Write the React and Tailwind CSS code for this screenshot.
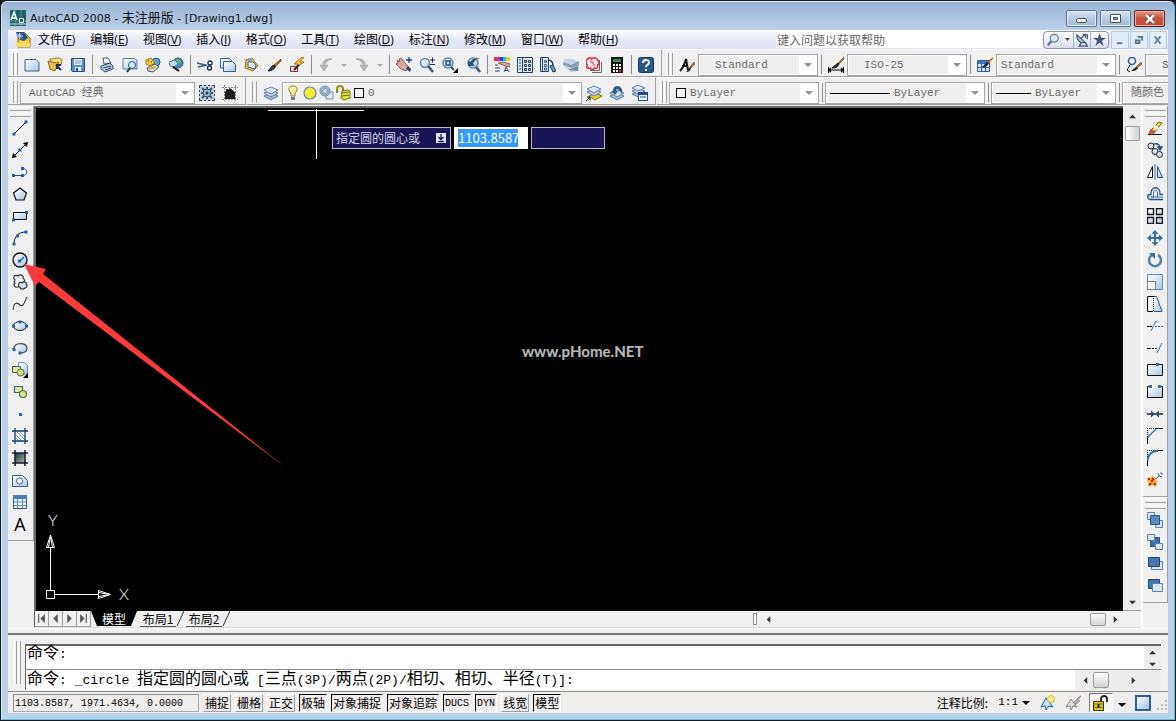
import React, { useState } from "react";

const ICONS = {
  // standard toolbar
  new: <path d="M1 2.500h11l3 3V14H1z" fill="url(#pale)" stroke="#33608f" />,
  open: (
    <>
      <path d="M3 2l9-1 3 2-1 5-9 1z" fill="#f5dc84" stroke="#a87f1c" />
      <path d="M1 4l3 1 6 1 2-1-4 9-5-2z" fill="#e9bd4d" stroke="#8d6a18" />
      <path d="M9 8l5 5M10 12V8h4" fill="none" stroke="#17315c" strokeWidth="2" />
    </>
  ),
  save: (
    <>
      <path d="M1.500 1.500h13v13h-12l-1-1z" fill="#5b8fc4" stroke="#214a7d" />
      <path d="M4 2h8v6H4zM5 10h6v4H5z" fill="#e6eef7" />
      <path d="M5 4h6M5 6h6" stroke="#7c9cc0" />
      <path d="M6 11h2v3H6z" fill="#214a7d" />
    </>
  ),
  print: (
    <>
      <path d="M4 1h5l3 5-7 1z" fill="#fff" stroke="#43597c" />
      <path d="M2 9l9-3 3 3v3l-8 3-4-3z" fill="#b9c8dd" stroke="#33496e" />
      <path d="M4 11l8-2M6 13l6-2" stroke="#33496e" />
    </>
  ),
  preview: (
    <>
      <path d="M1 1.500h12l2 2V12H1z" fill="url(#pale)" stroke="#5c7fa8" />
      <circle cx="10" cy="8" r="3.500" fill="#d4ecf5" stroke="#2c5687" />
      <path d="M8 11l-3 4" stroke="#17315c" strokeWidth="2" />
    </>
  ),
  publish: (
    <>
      <circle cx="11" cy="5" r="4" fill="#5ea1d0" stroke="#2a5a88" />
      <path d="M1 3l5-2 4 5-5 3-4-2z" fill="#f5cb3c" stroke="#9d7b12" />
      <path d="M3 4h1M6 5h1" stroke="#5c4607" strokeWidth="1.500" />
      <path d="M2 11l8-4 4 3-6 5-5-1z" fill="#dde5ee" stroke="#40587c" />
      <path d="M4 12l7-2" stroke="#dda821" strokeWidth="2" />
    </>
  ),
  dwf: (
    <>
      <circle cx="10" cy="6" r="5" fill="#3e8fb8" stroke="#355a7d" />
      <path d="M8 2c3 0 4 1 5 3l-3 3-3-2z" fill="#56b872" />
      <path d="M1 5l6-2 3 4-4 3-4-1z" fill="#c9dbea" stroke="#57789c" />
      <path d="M5 10l6 4" stroke="#111" strokeWidth="2" />
    </>
  ),
  cut: (
    <>
      <path d="M0 6l10 2.500M1 10l9-2" stroke="#3b5c86" strokeWidth="1.300" />
      <circle cx="13" cy="6" r="2" fill="none" stroke="#1b2b4b" strokeWidth="1.300" />
      <circle cx="12.500" cy="11" r="2" fill="none" stroke="#1b2b4b" strokeWidth="1.300" />
    </>
  ),
  copy: (
    <>
      <path d="M.5 1.500h9l2 2V11H.5z" fill="url(#pale)" stroke="#33608f" />
      <path d="M3.500 4.500h9l3 3v7h-12z" fill="url(#pale)" stroke="#33608f" />
    </>
  ),
  paste: (
    <>
      <path d="M3 3l6-2 6 8-5 5-8-3z" fill="#e8c462" stroke="#8f6e20" />
      <path d="M5 1h4v3H5z" fill="#8fa0b8" />
      <path d="M5 5h5l3 3-1 4-7-2z" fill="#eaf2fa" stroke="#33608f" />
    </>
  ),
  match: (
    <>
      <path d="M15 2L8 8l1 2 6-6z" fill="#b5701d" stroke="#5a3a12" strokeWidth=".7" />
      <path d="M8 8l1.500 2C7 13 5 14 2 14c2-2 3-5 6-6z" fill="#33415b" stroke="#111827" />
    </>
  ),
  block: (
    <>
      <path d="M1.500 9.500h7v5h-7z" fill="#dce9f7" stroke="#a3231c" />
      <path d="M13 0L5 7h4l-3 4 9-6h-4l4-5z" fill="#fac832" stroke="#a86a0c" />
      <path d="M5 13l5-5" stroke="#222b3f" strokeWidth="2" />
    </>
  ),
  undo: <path d="M14 2C8 1 4 4 5 9l-3-1 4 6 4-6-3 1c0-4 3-6 7-7z" fill="#b9b9b9" stroke="#adadad" />,
  redo: <path d="M2 2c6-1 10 2 9 7l3-1-4 6-4-6 3 1c0-4-3-6-7-7z" fill="#b9b9b9" stroke="#adadad" />,
  pan: (
    <>
      <path d="M1 3l3 2-1-3 2-1 4 5 1 1 3 4-3 3-5-2-5-5 2-1z" fill="#e0a39b" stroke="#8a5a58" />
      <path d="M10 12l4 3 1-3-3-3z" fill="#1f3f77" />
      <path d="M13 0v6M10 3h6" stroke="#1f3f77" strokeWidth="1.300" />
    </>
  ),
  zoom: (
    <>
      <circle cx="6" cy="6" r="4.500" fill="url(#pale)" stroke="#6683a5" strokeWidth="1.500" />
      <path d="M9 9l5 6" stroke="#39537b" strokeWidth="2.500" />
      <path d="M11 3h5M13.500.5v5M11 7.500h5" stroke="#1d3155" />
    </>
  ),
  zoomWindow: (
    <>
      <circle cx="6" cy="6" r="5" fill="url(#pale)" stroke="#6683a5" strokeWidth="1.500" />
      <path d="M4 4h4v4H4z" fill="none" stroke="#1f4d88" strokeWidth="1.500" />
      <path d="M9 10l3 3" stroke="#39537b" strokeWidth="2" />
      <path d="M16 11v5h-5z" fill="#000" />
    </>
  ),
  zoomPrev: (
    <>
      <circle cx="8" cy="6" r="5" fill="url(#pale)" stroke="#6683a5" strokeWidth="1.500" />
      <path d="M11 10l4 5" stroke="#39537b" strokeWidth="2.500" />
      <path d="M3 9V3l2 2c2-3 5-4 10-4-4 1-6 3-7 6l2 2z" fill="#27517f" />
    </>
  ),
  props: (
    <>
      <path d="M0 0h3v4H0z" fill="#d33" />
      <path d="M3 0h3v4H3z" fill="#c2c" />
      <path d="M6 0h3v4H6z" fill="#24d" />
      <path d="M9 0h3v4H9z" fill="#1cc" />
      <path d="M12 0h4v4h-4z" fill="#ec2" />
      <path d="M4 6l6-1 6 2v3l-5-1z" fill="#e0a39b" stroke="#8a5a58" />
      <path d="M1 8h3M1 11h5M1 14h5M10 15l2-5 3 5M11 13.500h3" fill="none" stroke="#31496f" />
    </>
  ),
  designCenter: (
    <>
      <path d="M.5.5h15v15H.5z" fill="#e7eef7" stroke="#193d70" />
      <path d="M5.500 1v14" stroke="#193d70" />
      <path d="M2 3h2M2 6h2M2 9h2M2 12h2" stroke="#193d70" />
      <path d="M7.500 3.500h2v2h-2zM11.500 3.500h2v2h-2zM7.500 7.500h2v2h-2zM11.500 7.500h2v2h-2zM7.500 11.500h2v2h-2zM11.500 11.500h2v2h-2z" fill="#d7c98c" stroke="#193d70" />
    </>
  ),
  palettes: (
    <>
      <path d="M.5.5h8v14h-8z" fill="#e7eef7" stroke="#193d70" />
      <path d="M2.500 1v13" stroke="#193d70" />
      <path d="M4.500 3.500h2v2h-2zM4.500 7.500h2v2h-2zM4.500 11h2v2h-2z" fill="#fff" stroke="#2c5a93" />
      <path d="M8 3c3 0 5 1 5 6" fill="none" stroke="#193d70" strokeWidth="1.500" />
      <path d="M10 9l3-1 3 6-3 1z" fill="#6b8fb9" stroke="#193d70" />
    </>
  ),
  sheetSet: (
    <>
      <path d="M1 2h9l6 3v9l-8 1-7-5z" fill="#c5d3de" />
      <path d="M0 5l8 3 8-4v4l-7 3-9-3z" fill="#86a2b6" />
      <path d="M5 13l10-4v5z" fill="#6d8ba1" />
    </>
  ),
  markup: (
    <>
      <path d="M4 13.500h9.500V3M6 15.500h9.500V5" fill="none" stroke="#6a6a6a" />
      <path d="M1.500 2c2-2 4-1 4 0 2-2 6-1 6 1 2 1 2 4 0 5 1 3-1 4-3 3-1 2-4 2-4 0-3 1-5-1-3-3-2-2-2-4 0-6z" fill="#fbeaec" stroke="#d9294a" strokeWidth="1.500" />
      <path d="M4 5h3v2M7 8h2" fill="none" stroke="#d9294a" />
    </>
  ),
  calc: (
    <>
      <path d="M2 0h12v16H2z" fill="#151515" />
      <path d="M4 2h8v3H4z" fill="#3f8a4c" />
      <path d="M4 7h2v2H4zM7 7h2v2H7zM10 7h2v2h-2zM4 10h2v2H4zM7 10h2v2H7zM10 10h2v2h-2zM4 13h2v2H4zM7 13h2v2H7z" fill="#f4f4f4" />
      <path d="M10 13h2v2h-2z" fill="#e22" />
    </>
  ),
  help: (
    <>
      <rect x=".5" y=".5" width="15" height="15" rx="2" fill="#27588f" stroke="#183a66" />
      <path d="M5 6c0-4 6-4 6-.5C11 8 8 7.500 8 10M8 12v2" fill="none" stroke="#fff" strokeWidth="2" />
    </>
  ),
  // styles
  textStyle: (
    <>
      <path d="M1 14C4 11 6 6 7 2l2 11M3 9h6" fill="none" stroke="#111" strokeWidth="2" />
      <path d="M15 5l-4 5 1 1 4-4z" fill="#b57d3d" stroke="#5a3a12" strokeWidth=".6" />
      <path d="M11 10l-4 5c3 0 4-1 5-4z" fill="#222" />
    </>
  ),
  dimStyle: (
    <>
      <path d="M.5 10v6M15.500 10v6M1 13h14M3 11l-2 2 2 2M13 11l2 2-2 2" fill="none" stroke="#000" strokeWidth="1.200" />
      <path d="M16 0l-6 6 1 1 5-5z" fill="#b5701d" stroke="#5a3a12" strokeWidth=".6" />
      <path d="M10 6l-6 5c3 0 5 0 7-4z" fill="#222" stroke="#222" />
    </>
  ),
  tableStyle: (
    <>
      <path d="M.5 3.500h12v11H.5z" fill="#cfe0f2" stroke="#2d5e9c" />
      <path d="M1 4h11v3H1z" fill="#3b75b8" />
      <path d="M1 10.500h11M4.500 7v7M8.500 7v7" stroke="#2d5e9c" />
      <path d="M16 0l-6 5 1 2 5-5z" fill="#b5701d" />
      <path d="M10 5l-5 5c3 0 5 0 7-4z" fill="#222" />
    </>
  ),
  leaderStyle: (
    <>
      <circle cx="6" cy="4" r="3.500" fill="#e8f2fb" stroke="#2d5e9c" strokeWidth="1.500" />
      <path d="M4 8l-3 5 3 2" fill="none" stroke="#000" />
      <path d="M15 5l-5 5 1 1 5-4z" fill="#b57d3d" stroke="#5a3a12" strokeWidth=".6" />
      <path d="M10 10l-5 4c3 0 5 0 7-3z" fill="#222" />
    </>
  ),
  // workspaces and layers
  gearBox: (
    <>
      <path d="M0 0h16v16H0z" fill="#c5d0da" />
      <path d="M.5 3V.5H3M13 .5h2.500V3M15.500 13v2.500H13M3 15.500H.5V13M5 .5h2M9 .5h2M5 15.500h2M9 15.500h2M.5 5v2M.5 9v2M15.500 5v2M15.500 9v2" fill="none" stroke="#23405f" />
      <path d="M3 3l10 10M13 3L3 13M8 2v12M2 8h12" stroke="#35546f" strokeWidth="2" />
      <circle cx="8" cy="8" r="4" fill="#9fb8cf" stroke="#2c4a68" />
      <circle cx="8" cy="8" r="1.500" fill="#23405f" />
    </>
  ),
  home: (
    <>
      <path d="M0 2.500h16M0 14.500h16M2.500 0v16M13.500 0v16" stroke="#888" strokeDasharray="2 1" />
      <path d="M8 3l6 5h-1v6H3V8H2l2-2V4h2v1z" fill="#1d1d1d" />
    </>
  ),
  layers: (
    <>
      <path d="M1 11l7-3 7 3-7 4z" fill="#a5bdd6" stroke="#5f7fa3" />
      <path d="M1 8l7-3 7 3-7 4z" fill="#c1d3e5" stroke="#5f7fa3" />
      <path d="M1 5l7-3 7 3-7 4z" fill="#dbe7f2" stroke="#5f7fa3" />
    </>
  ),
  bulb: (
    <>
      <path d="M8 1c-5 0-5 5-2 7v3h4V8c3-2 3-7-2-7z" fill="#fbf6a0" stroke="#8b7d2a" />
      <path d="M6 12h4v3H6z" fill="#6b7f95" />
    </>
  ),
  sun: <circle cx="8" cy="8" r="6" fill="#f4ea3a" stroke="#6d86a0" strokeWidth="1.200" />,
  viewport: (
    <>
      <path d="M7 7h7v7H7z" fill="#dfe6ee" stroke="#7d92a8" />
      <circle cx="6" cy="6" r="5" fill="#9db8ca" stroke="#6f8ea8" />
      <path d="M2 6h8M6 2v8M3.500 3.500l5 5M8.500 3.500l-5 5" stroke="#6f8ea8" />
      <circle cx="6" cy="6" r="2" fill="#c9d9e4" />
    </>
  ),
  unlock: (
    <>
      <path d="M1 8V4c0-4 6-4 6 0v2" fill="none" stroke="#8b8f1d" strokeWidth="2" />
      <path d="M6 6l6-1 2 1v7l-6 2-3-2z" fill="#dfe23e" stroke="#73761a" />
      <path d="M6 8l7-1M6 11l7-1" stroke="#73761a" />
    </>
  ),
  layerCurrent: (
    <>
      <path d="M3 11l6-3 7 3-7 4z" fill="#e4d22a" stroke="#7f7416" />
      <path d="M1 7l7-3 7 3-7 4z" fill="#c1d3e5" stroke="#5f7fa3" />
      <path d="M1 4l7-3 7 3-7 4z" fill="#dbe7f2" stroke="#5f7fa3" />
      <path d="M0 16l4-4M1 12h3v3" fill="none" stroke="#000" />
    </>
  ),
  layerPrev: (
    <>
      <path d="M1 11l7-3 7 3-7 4z" fill="#a5bdd6" stroke="#5f7fa3" />
      <path d="M1 8l7-3 7 3-7 4z" fill="#dbe7f2" stroke="#5f7fa3" />
      <path d="M13 9c1-5-1-8-5-8-3 0-4 3-4 5H2l4 4 3-4H7c0-3 2-3 6 3z" fill="#2f5c8d" />
    </>
  ),
  layerState: (
    <>
      <path d="M0 9l6-3 7 3-7 3z" fill="#a5bdd6" stroke="#5f7fa3" />
      <path d="M0 6l6-3 7 3-7 3z" fill="#c1d3e5" stroke="#5f7fa3" />
      <path d="M0 3l6-3 7 3-7 3z" fill="#dbe7f2" stroke="#5f7fa3" />
      <path d="M6.500 7.500h9v8h-9z" fill="#f2f7fc" stroke="#1c4f8c" />
      <path d="M6 7h10v3H6z" fill="#1c4f8c" />
      <path d="M8 12h6" stroke="#1c4f8c" />
    </>
  ),
  // draw
  line: (
    <>
      <path d="M2 14L14 2" stroke="#000" />
      <path d="M.5 12.500h3v3h-3zM12.500.5h3v3h-3z" fill="#1e63a8" />
    </>
  ),
  xline: (
    <>
      <path d="M1 15L15 1" stroke="#000" />
      <path d="M0 16l1-5 4 4zM16 0l-1 5-4-4z" fill="#000" />
      <path d="M6.500 6.500h3v3h-3z" fill="#1e63a8" />
    </>
  ),
  pline: (
    <>
      <path d="M2 11.500h9c5 0 5-7 0-7" fill="none" stroke="#334a66" />
      <path d="M0 10h3v3H0zM9 10h3v3H9zM9 3h3v3H9z" fill="#1e63a8" />
    </>
  ),
  polygon: <path d="M8 2l6.500 5-2.500 7H4L1.500 7z" fill="url(#pale)" stroke="#111" strokeWidth="1.200" />,
  rect: (
    <>
      <path d="M1.500 4.500h13v7h-13z" fill="url(#pale)" stroke="#111" />
      <path d="M0 10.500h3v3H0zM13 3h3v3h-3z" fill="#1e63a8" />
    </>
  ),
  arc: (
    <>
      <path d="M2 14C2 7 6 2 14 2" fill="none" stroke="#111" />
      <path d="M.5 12.500h3v3h-3zM4 4.500h3v3H4zM12.500.5h3v3h-3z" fill="#1e63a8" />
    </>
  ),
  circle: (
    <>
      <circle cx="8" cy="8" r="7" fill="url(#pale)" stroke="#111" strokeWidth="1.300" />
      <path d="M8 9l4-4" stroke="#1e63a8" strokeWidth="1.500" />
      <path d="M6 7.500h3v3H6z" fill="#1e63a8" />
    </>
  ),
  cloud: (
    <>
      <path d="M3 6C0 3 3 0 6 2c2-2 6-1 5 2 2 1 2 4 0 5l-5 4c-3 1-5-2-3-4 -1-1-1-2 0-3z" fill="#f4f8fc" stroke="#333" strokeWidth="1.200" />
      <path d="M7 10c0-2 2-2 3-1 1-2 5-1 4 1 2 1 1 4-1 4-2 2-5 1-5-1-2 0-2-2-1-3z" fill="url(#pale)" stroke="#333" strokeWidth="1.200" />
    </>
  ),
  spline: <path d="M1 14c1-8 4-8 7-5s5-4 7-8" fill="none" stroke="#333" strokeWidth="1.100" />,
  ellipse: (
    <>
      <ellipse cx="8" cy="8" rx="6.500" ry="4.500" fill="url(#pale)" stroke="#111" />
      <path d="M0 6.500h3v3H0zM13 6.500h3v3h-3zM6.500 2.500h3v3h-3z" fill="#1e63a8" />
    </>
  ),
  ellipseArc: (
    <>
      <path d="M2 9c-1-7 13-7 13-1 0 4-4 5-6 5" fill="url(#pale)" stroke="#444" strokeWidth="1.200" />
      <path d="M.5 8h3v3h-3zM6.500 11.500h3v3h-3z" fill="#1e63a8" />
    </>
  ),
  insertBlock: (
    <>
      <path d="M6.500.5h6l3 3V12h-9z" fill="url(#pale)" stroke="#6e8fb4" />
      <path d="M.5 4.500h8v6h-8z" fill="#e9eb8a" stroke="#33608f" />
      <circle cx="8.500" cy="10.500" r="3.500" fill="#dfe57a" stroke="#446b4a" />
      <path d="M16 11v5h-5z" fill="#000" />
    </>
  ),
  makeBlock: (
    <>
      <path d="M2.500 2.500h8v6h-8z" fill="#e9eb8a" stroke="#33608f" strokeWidth="1.200" />
      <circle cx="11" cy="10" r="3.500" fill="#dfe57a" stroke="#446b4a" strokeWidth="1.200" />
    </>
  ),
  point: <path d="M7 7h3v3H7z" fill="#1e63a8" />,
  hatch: (
    <>
      <path d="M4 4h9v9H4z" fill="#fff" />
      <path d="M4 7l6 6M4 10l3 3M5 4l8 8M8 4l5 5" stroke="#5a9ad0" />
      <path d="M3 0v16M13 0v16M0 3h16M0 13h16" stroke="#173a66" strokeWidth="1.300" />
    </>
  ),
  gradient: (
    <>
      <path d="M3 3h10v10H3z" fill="url(#dusk)" />
      <path d="M3 0v16M13 0v16M0 3h16M0 13h16" stroke="#111c30" strokeWidth="1.500" />
    </>
  ),
  region: (
    <>
      <path d="M.5 3.500h10l5 5v6H.5z" fill="url(#pale)" stroke="#33608f" />
      <circle cx="7.500" cy="9" r="3" fill="#fff" stroke="#33608f" />
    </>
  ),
  table: (
    <>
      <path d="M1.500 1.500h13v13h-13z" fill="#eef4fb" stroke="#33608f" />
      <path d="M1 1h14v4H1z" fill="#4b7fbd" />
      <path d="M2 8h12M2 11.500h12M5.500 5v9M10.500 5v9" stroke="#5f8bc0" />
    </>
  ),
  // modify
  erase: (
    <>
      <path d="M1 14.500h14" stroke="#000" />
      <path d="M4 10l8-8 3 1-7 9H5z" fill="#f2d33b" stroke="#7a6413" />
      <path d="M4 9l4 3-3 3-3-2z" fill="#d8594a" stroke="#8d3a30" strokeWidth=".6" />
      <path d="M6 7l4 3 2-2-4-3z" fill="#f7f7f7" />
    </>
  ),
  copyObj: (
    <>
      <circle cx="4" cy="4" r="3" fill="url(#pale)" stroke="#222" />
      <circle cx="8" cy="9.500" r="3" fill="url(#pale)" stroke="#222" />
      <circle cx="12.500" cy="12.500" r="3" fill="url(#pale)" stroke="#222" />
      <path d="M7 2c4-1 6 1 6 4M11 5l2 3 2-3z" fill="none" stroke="#1e4f88" strokeWidth="1.500" />
    </>
  ),
  mirror: (
    <>
      <path d="M5.500 2.500v11h-5z" fill="#fff" stroke="#111" />
      <path d="M8 0v16" stroke="#2d6fb4" />
      <path d="M10.500 2.500v11h5z" fill="url(#pale)" stroke="#24527f" />
    </>
  ),
  offset: (
    <>
      <path d="M16 13.500H3c-3 0-3-5 0-5h1c-1-9 10-9 9 0h3" fill="none" stroke="#24527f" strokeWidth="1.300" />
      <path d="M16 11H4.500c-1 0-1 0 0 0H6.500V7c0-4 4-4 4 0v4" fill="none" stroke="#2d6fb4" />
    </>
  ),
  array: <path d="M.5.5h6v6h-6zM9.500.5h6v6h-6zM.5 9.500h6v6h-6zM9.500 9.500h6v6h-6z" fill="url(#pale)" stroke="#111" strokeWidth="1.300" />,
  move: (
    <>
      <path d="M8 2v12M2 8h12" stroke="#3c6da3" strokeWidth="2" />
      <path d="M8 0l3.500 4h-7zM8 16l3.500-4h-7zM0 8l4-3.500v7zM16 8l-4-3.500v7z" fill="#3c6da3" />
    </>
  ),
  rotate: (
    <>
      <path d="M5 3a6 6 0 1 0 6 0" fill="none" stroke="#557fad" strokeWidth="2.500" />
      <path d="M2 1h6v6z" fill="#3c6da3" />
    </>
  ),
  scale: (
    <>
      <path d="M.5.5h15v15H.5z" fill="url(#pale)" stroke="#5b8bbd" />
      <path d="M.5 7.500h8v8h-8z" fill="#fff" stroke="#fff" />
      <path d="M.5 7.500h8v8h-8z" fill="none" stroke="#000" strokeDasharray="1 1" />
    </>
  ),
  stretch: (
    <>
      <path d="M6.500.5h3l5.500 15H6.500z" fill="url(#pale)" stroke="#2a5d92" />
      <path d="M6 .5H.5v15H6" fill="none" stroke="#000" />
      <path d="M6.500 0v16" stroke="#fff" />
      <path d="M6.500 0v16" stroke="#000" strokeDasharray="1 1" />
    </>
  ),
  trim: (
    <>
      <path d="M0 8.500h5" stroke="#000" />
      <path d="M4 13L9 3" stroke="#2d6fb4" />
      <path d="M8 8.500h8" stroke="#2d6fb4" strokeDasharray="2 1" />
    </>
  ),
  extend: (
    <>
      <path d="M0 8.500h4" stroke="#000" />
      <path d="M5 8.500h6" stroke="#000" strokeDasharray="2 1" />
      <path d="M10 13l5-10" stroke="#2d6fb4" />
    </>
  ),
  breakPt: (
    <>
      <path d="M.5 2.500h15v11H.5z" fill="url(#pale)" stroke="#111" />
      <path d="M9 1h3v3H9z" fill="#3c6da3" />
    </>
  ),
  breakObj: (
    <>
      <path d="M3 2.500H.5v11h15v-11H13" fill="url(#pale)" stroke="#111" />
      <path d="M2 1h3v3H2zM11 1h3v3h-3z" fill="#3c6da3" />
    </>
  ),
  join: (
    <>
      <path d="M0 8h16" stroke="#000" strokeWidth="1.300" />
      <path d="M4 4.500L8 8l-4 3.500zM12 4.500L8 8l4 3.500z" fill="#2a4d75" />
    </>
  ),
  chamfer: (
    <>
      <path d="M.5 9v7M9 .5h7" stroke="#000" />
      <path d="M.5 9V.5H9" fill="none" stroke="#000" strokeDasharray="1 1" />
      <path d="M.5 9.500l9-9" stroke="#2d6fb4" strokeWidth="1.300" />
    </>
  ),
  fillet: (
    <>
      <path d="M.5 9v7M10 .5h6" stroke="#000" />
      <path d="M.5 9V.5H9" fill="none" stroke="#000" strokeDasharray="1 1" />
      <path d="M.5 11C1 4 5 1 11 1" fill="none" stroke="#2d6fb4" strokeWidth="1.800" />
    </>
  ),
  explode: (
    <>
      <path d="M1 5l3 1 1-3 2 3 3-1-1 3 2 2-3 1 0 4-3-2-4 2 1-4-2-2z" fill="#f1b52d" />
      <path d="M1 7h2M5 6l2 2M7 11l2 2M2 13l2-2M4 9h2" stroke="#c32217" strokeWidth="2" />
      <path d="M9 7l4-4M11 1l1 3 3 1M14 0v2h2" stroke="#4c719c" fill="none" />
    </>
  ),
  front: (
    <>
      <path d="M.5.5h7v7h-7z" fill="#dbe7f3" stroke="#5a82ad" />
      <path d="M8.500 8.500h7v7h-7z" fill="#dbe7f3" stroke="#5a82ad" />
      <path d="M3.500 3.500h9v9h-9z" fill="#5c8bc0" stroke="#2c5687" />
    </>
  ),
  back: (
    <>
      <path d="M3.500 3.500h9v9h-9z" fill="#3f72ab" stroke="#2c5687" />
      <path d="M.5.5h7v6h-7z" fill="#dbe7f3" stroke="#5a82ad" />
      <path d="M8.500 9.500h7v6h-7z" fill="#dbe7f3" stroke="#5a82ad" />
    </>
  ),
  above: (
    <>
      <path d="M4.500 5.500h11v8h-11z" fill="#dbe7f3" stroke="#5a82ad" />
      <path d="M1.500 1.500h11v9h-11z" fill="#4476b0" stroke="#1f4674" />
    </>
  ),
  under: (
    <>
      <path d="M1.500 1.500h11v9h-11z" fill="#4476b0" stroke="#1f4674" />
      <path d="M5.500 5.500h10v8h-10z" fill="#dbe7f3" stroke="#5a82ad" />
    </>
  ),
  // menu bar
  doc: (
    <>
      <path d="M3 1h7l5 5v9H3z" fill="#f6c83a" stroke="#8a6a1c" />
      <path d="M1 0h8l4 6-4 3-6-2z" fill="#2a4f86" />
      <path d="M1 4h7M4.500 1v6M2 1.500l5 5M7 1.500l-5 5" stroke="#dfe9f5" strokeWidth=".8" />
      <path d="M1 11l9-2 5 2v4H1z" fill="#fadb63" />
    </>
  ),
  search: (
    <>
      <circle cx="9.500" cy="6" r="4.500" fill="#d9e8f7" stroke="#6f7f99" strokeWidth="1.500" />
      <path d="M6 9.500L2 14" stroke="#5f6c85" strokeWidth="2.500" />
    </>
  ),
  dish: (
    <>
      <path d="M2 2c0 7 4 10 10 9z" fill="#b8c4dc" stroke="#3f5078" strokeWidth="1.200" />
      <path d="M7 6l4-4M9 1.500h3v4M14 1v6M7 11l-2 4h9l-2-4" fill="none" stroke="#3f5078" strokeWidth="1.500" />
    </>
  ),
  star: <path d="M8 0l2 6h6l-5 3.500L13 16l-5-4-5 4 2-6.500L0 6h6z" fill="#44557f" />,
  scaleLight: (
    <>
      <path d="M6 3l7 9-4-1-3 4-1-4-4 1z" fill="#c7dbf1" stroke="#2a5d9c" />
      <circle cx="11" cy="4" r="3.500" fill="#fbf08a" stroke="#d0b94a" />
    </>
  ),
  scaleAuto: (
    <>
      <path d="M6 4l6 8-4-1-2 4-1-4-4 1z" fill="#dcdcdc" stroke="#8b8b8b" />
      <path d="M15 1l-6 6 2 1-2 3 6-5-2-1 3-4z" fill="#b0b0b0" stroke="#8b8b8b" strokeWidth=".7" />
    </>
  ),
  padlock: (
    <>
      <path d="M8 7V4c0-4 6-4 6 0v3" fill="none" stroke="#222" strokeWidth="1.800" />
      <path d="M.5 6.500h10v9H.5z" fill="#e1c91f" stroke="#3a3307" />
      <path d="M1 9h9M1 12.500h9" stroke="#7a6a0c" />
      <path d="M4.500 9h2v4h-2z" fill="#222" />
    </>
  ),
};

const Icon = ({ name, className = "size-4" }) => (
  <svg viewBox="0 0 16 16" className={`shrink-0 ${className}`} aria-hidden="true">
    {ICONS[name]}
  </svg>
);

const ToolButton = ({ name }) => (
  <button aria-label={name} className="flex h-[22px] w-[23px] shrink-0 items-center justify-center">
    <Icon name={name} />
  </button>
);

const Tools = ({ names }) => names.map((n) => <ToolButton key={n} name={n} />);

const Sep = () => (
  <div className="flex w-[6px] shrink-0 justify-center self-stretch pt-[5px] pb-[2px]">
    <div className="w-px bg-[#8c8c8c]" />
  </div>
);

const Grip = () => (
  <div className="flex w-3 shrink-0 gap-px self-stretch pt-[3px] pb-px pl-[3px]">
    <div className="w-[3px] border-r border-l border-l-white border-r-[#a0a0a0]" />
    <div className="w-[3px] border-r border-l border-l-white border-r-[#a0a0a0]" />
  </div>
);

const DockGrip = () => (
  <div className="flex h-[11px] w-[21px] flex-col gap-[2px] pt-px">
    <div className="h-[4px] border-t border-b border-t-white border-b-[#a0a0a0]" />
    <div className="h-[4px] border-t border-b border-t-white border-b-[#a0a0a0]" />
  </div>
);

const Toolbar = ({ children, className = "" }) => (
  <div className={`flex items-end border-t border-b border-t-white border-b-[#a0a0a0] ${className}`}>
    {children}
  </div>
);

const Down = ({ className = "h-1 w-2 text-[#8f8f8f]" }) => (
  <svg viewBox="0 0 8 4" className={className} aria-hidden="true">
    <path d="M0 0h8L4 4z" fill="currentColor" />
  </svg>
);

const DropButton = ({ label }) => (
  <button aria-label={label} className="flex h-[22px] w-[13px] items-center justify-center">
    <Down className="h-[3px] w-[6px] text-[#aaa]" />
  </button>
);

const Arrow = ({ dir, label, className = "size-4" }) => {
  const paths = { up: "M4 2l4 4H0z", down: "M0 2h8L4 6z", left: "M6 0v8L2 4z", right: "M2 0v8l4-4z" };
  return (
    <button aria-label={label || dir} className={`flex shrink-0 items-center justify-center ${className}`}>
      <svg viewBox="0 0 8 8" className="size-[7px]">
        <path d={paths[dir]} fill="#333" />
      </svg>
    </button>
  );
};

const Combo = ({ label, value, children, className = "", pad = "pl-1" }) => (
  <div className={`flex h-[22px] shrink-0 items-center border border-[#a5a5a5] bg-[#efefef] outline-1 -outline-offset-2 outline-white ${className}`}>
    {children}
    <select
      aria-label={label}
      className={`min-w-0 flex-1 appearance-none bg-transparent font-['Liberation_Mono','Noto_Sans_CJK_SC',monospace] text-[11px] leading-4 text-[#6a6a6a] outline-none ${pad}`}
    >
      <option>{value}</option>
    </select>
    <div className="mr-px flex h-[18px] w-[17px] items-center justify-center bg-white">
      <Down />
    </div>
  </div>
);

const menus = [
  ["文件", "F"],
  ["编辑", "E"],
  ["视图", "V"],
  ["插入", "I"],
  ["格式", "O"],
  ["工具", "T"],
  ["绘图", "D"],
  ["标注", "N"],
  ["修改", "M"],
  ["窗口", "W"],
  ["帮助", "H"],
];

const drawTools = ["line", "xline", "pline", "polygon", "rect", "arc", "circle", "cloud", "spline", "ellipse", "ellipseArc", "insertBlock", "makeBlock", "point", "hatch", "gradient", "region", "table"];
const modifyTools = ["erase", "copyObj", "mirror", "offset", "array", "move", "rotate", "scale", "stretch", "trim", "extend", "breakPt", "breakObj", "join", "chamfer", "fillet", "explode"];
const orderTools = ["front", "back", "above", "under"];

const modes = [
  { name: "捕捉", on: false },
  { name: "栅格", on: false },
  { name: "正交", on: false },
  { name: "极轴", on: true },
  { name: "对象捕捉", on: true },
  { name: "对象追踪", on: true },
  { name: "DUCS", on: true, latin: true },
  { name: "DYN", on: true, latin: true },
  { name: "线宽", on: false },
  { name: "模型", on: true },
];

const TitleBar = () => (
  <header className="flex h-7 shrink-0 items-center pr-[3px] pl-[2px]">
    <svg viewBox="0 0 16 16" className="mt-1 size-4" aria-hidden="true">
      <path d="M0 0h16v16H0z" fill="#1d6163" />
      <path d="M0 11h16M11 0v16M5 0v16" stroke="#4f9a97" />
      <path d="M1 10l3-8 3 8M2 8h4" fill="none" stroke="#fff" strokeWidth="1.500" />
      <path d="M9.500 8.500h4v4h-4z" fill="#1d6163" stroke="#fff" />
      <path d="M0 14h16" stroke="#cfe8e6" />
    </svg>
    <h1 className="mt-1 ml-1 flex-1 font-['DejaVu_Sans','Noto_Sans_CJK_SC',sans-serif] text-[11px] leading-5 text-[#111]">
      AutoCAD 2008 - <span className="text-[13px]">未注册版</span> - [Drawing1.dwg]
    </h1>
    <div className="mt-[5px] flex gap-[3px]">
      <button aria-label="最小化" className="flex h-[17px] w-[31px] items-center justify-center rounded-xs border border-[#5b6f8a] bg-gradient-to-b from-[#d5e2f1] to-[#9db8d6] outline-1 -outline-offset-2 outline-[#e6eff8]">
        <span className="mt-1 h-[5px] w-[11px] rounded-xs border border-[#454f5e] bg-white" />
      </button>
      <button aria-label="还原" className="flex h-[17px] w-[31px] items-center justify-center rounded-xs border border-[#5b6f8a] bg-gradient-to-b from-[#d5e2f1] to-[#9db8d6] outline-1 -outline-offset-2 outline-[#e6eff8]">
        <svg viewBox="0 0 11 9" className="h-[9px] w-[11px]">
          <path d="M.5.5h10v8H.5z" fill="#fff" stroke="#454f5e" />
          <path d="M3.500 3.500h4v2h-4z" fill="#8aa7c8" stroke="#454f5e" />
        </svg>
      </button>
      <button aria-label="关闭" className="flex h-[17px] w-[31px] items-center justify-center rounded-xs border border-[#5a2020] bg-gradient-to-b from-[#e09a86] via-[#c9503a] to-[#c44a35] outline-1 -outline-offset-2 outline-[#eab4a6]">
        <svg viewBox="0 0 12 10" className="h-[10px] w-3">
          <path d="M2 1l8 8M10 1L2 9" stroke="#5c2a2a" strokeWidth="4" />
          <path d="M2 1l8 8M10 1L2 9" stroke="#fff" strokeWidth="2.500" />
        </svg>
      </button>
    </div>
  </header>
);

const MenuBar = () => (
  <nav className="flex h-[19px] shrink-0 items-center bg-gradient-to-b from-white via-[#e6e9f5] to-[#dde1f1] pl-[7px]">
    <Icon name="doc" />
    <div className="ml-[7px] flex flex-1 gap-[15px]">
      {menus.map(([name, key]) => (
        <button key={key} className="font-['Open_Sans','Noto_Sans_CJK_SC',sans-serif] text-xs leading-[18px] whitespace-nowrap text-black">
          {name}(<u>{key}</u>)
        </button>
      ))}
    </div>
    <input
      aria-label="帮助"
      placeholder="键入问题以获取帮助"
      className="h-[17px] w-[267px] bg-white pl-px text-xs leading-4 outline-none placeholder:text-[#666]"
    />
    <div className="flex h-[18px] rounded-sm border border-[#8a93b3] bg-gradient-to-b from-white to-[#d8dcec]">
      <button aria-label="搜索" className="flex w-[29px] items-center gap-[5px] pl-[2px]">
        <Icon name="search" className="size-[14px]" />
        <svg viewBox="0 0 5 3" className="h-[3px] w-[5px]">
          <path d="M0 0h5L2.500 3z" fill="#444" />
        </svg>
      </button>
      <button aria-label="通讯中心" className="flex w-[17px] items-center justify-center border-l border-[#a5acc6]">
        <Icon name="dish" className="size-[14px]" />
      </button>
      <button aria-label="收藏夹" className="flex w-[18px] items-center justify-center border-l border-[#a5acc6]">
        <Icon name="star" className="size-[13px]" />
      </button>
    </div>
    <div className="mr-px ml-[2px] flex gap-px">
      {["M2 8h6v2H2z", "M4 1h6v5H8V3H4zM1 5h6v5H1zm2 2v1h2V7z", "M1 2l2-1 2 3 2-3 2 1-3 3.500L9 9 7 10 5 7l-2 3-2-1 3-3.500z"].map((d) => (
        <button key={d} aria-label="窗口" className="flex h-[18px] w-[18px] items-center justify-center border border-[#b4c9e2] bg-[#e3edf9]">
          <svg viewBox="0 0 11 11" className="size-[10px]">
            <path d={d} fill="#53749c" fillRule="evenodd" />
          </svg>
        </button>
      ))}
    </div>
  </nav>
);

const TopToolbars = () => (
  <div className="shrink-0 bg-[#f0f0f0]">
    <div className="flex h-7 overflow-hidden">
      <Toolbar className="border-r border-r-[#a0a0a0] pr-1">
        <Grip />
        <Tools names={["new", "open", "save"]} />
        <Sep />
        <Tools names={["print", "preview", "publish", "dwf"]} />
        <Sep />
        <Tools names={["cut", "copy", "paste", "match", "block"]} />
        <Sep />
        <ToolButton name="undo" />
        <DropButton label="undo list" />
        <ToolButton name="redo" />
        <DropButton label="redo list" />
        <Sep />
        <Tools names={["pan", "zoom", "zoomWindow", "zoomPrev"]} />
        <Sep />
        <Tools names={["props", "designCenter", "palettes", "sheetSet", "markup", "calc"]} />
        <Sep />
        <ToolButton name="help" />
      </Toolbar>
      <Toolbar className="ml-px min-w-0 flex-1 overflow-hidden">
        <Grip />
        <ToolButton name="textStyle" />
        <Combo label="文字样式" value="Standard" className="w-[120px]" pad="pl-4" />
        <Sep />
        <ToolButton name="dimStyle" />
        <Combo label="标注样式" value="ISO-25" className="w-[120px]" pad="pl-4" />
        <Sep />
        <ToolButton name="tableStyle" />
        <Combo label="表格样式" value="Standard" className="w-[120px]" />
        <Sep />
        <ToolButton name="leaderStyle" />
        <Combo label="多重引线样式" value="Standard" className="w-[120px]" pad="pl-4" />
      </Toolbar>
    </div>
    <div className="flex h-[29px] overflow-hidden pb-px">
      <Toolbar className="border-r border-r-[#a0a0a0] pr-1">
        <Grip />
        <Combo label="工作空间" value="AutoCAD 经典" className="w-[175px]" pad="pl-2" />
        <Tools names={["gearBox", "home"]} />
      </Toolbar>
      <Toolbar className="ml-px border-r border-r-[#a0a0a0] pr-1">
        <Grip />
        <ToolButton name="layers" />
        <Combo label="图层" value="0" className="w-[300px]">
          <div className="flex items-center gap-px pl-[2px]">
            <Icon name="bulb" />
            <Icon name="sun" />
            <Icon name="viewport" />
            <Icon name="unlock" />
            <span className="ml-px size-[10px] border border-black bg-white" />
          </div>
        </Combo>
        <Tools names={["layerCurrent", "layerPrev", "layerState"]} />
      </Toolbar>
      <Toolbar className="ml-px min-w-0 flex-1 overflow-hidden">
        <Grip />
        <Combo label="颜色" value="ByLayer" className="w-[150px]">
          <span className="ml-[6px] size-[10px] border border-black bg-white" />
        </Combo>
        <Sep />
        <Combo label="线型" value="ByLayer" className="w-[160px]">
          <span className="ml-1 h-px w-[60px] bg-black" />
        </Combo>
        <Sep />
        <Combo label="线宽" value="ByLayer" className="w-[125px]">
          <span className="ml-1 h-px w-[35px] bg-black" />
        </Combo>
        <Sep />
        <Combo label="打印样式" value="随颜色" className="w-[120px]" pad="pl-2" />
      </Toolbar>
    </div>
  </div>
);

const Canvas = () => {
  const [coord, setCoord] = useState("1103.8587");

  return (
    <div className="relative min-w-0 flex-1 overflow-hidden border-t-2 border-l-2 border-[#6a6a6a] bg-black">
      {/* crosshair */}
      <div className="absolute top-[2px] left-[232px] h-px w-24 bg-white" />
      <div className="absolute top-px left-[280px] h-[50px] w-px bg-white" />

      {/* dynamic input */}
      <div className="absolute top-[19px] left-[296px] flex gap-[3px] text-xs">
        <div className="flex h-[22px] w-[119px] items-center justify-between border border-[#b9b9dc] bg-[#181455] pr-1 pl-[3px] text-[#d3d3e6]">
          指定圆的圆心或
          <svg viewBox="0 0 10 10" className="size-[10px]">
            <path d="M0 0h10v10H0z" fill="#dfe8ff" />
            <path d="M5 1v5M2.500 4L5 6.500 7.500 4M2 8.500h6" fill="none" stroke="#181455" strokeWidth="1.300" />
          </svg>
        </div>
        <div className="flex h-[22px] w-[74px] items-center bg-white pl-1">
          <input
            aria-label="X"
            value={coord}
            onChange={(e) => setCoord(e.target.value)}
            className="h-[18px] w-[60px] bg-[#3399ff] text-[13px] leading-[18px] text-white outline-none"
          />
        </div>
        <input aria-label="Y" className="h-[22px] w-[74px] border border-[#b9b9dc] bg-[#181455] px-1 text-white outline-none" />
      </div>

      <p className="absolute top-[46%] left-[44.7%] font-['Lato',sans-serif] text-[15px] leading-6 font-black text-[#b4b4b4]">
        www.pHome.NET
      </p>

      {/* UCS icon */}
      <svg viewBox="0 0 100 100" className="absolute bottom-0 left-0 size-[100px]" fill="none" stroke="#fff">
        <path d="M10.500 79.500h8v8h-8zM14.500 79V36M19 83.500h43M10.500 36.500h8L14.500 24zM12.500 36l2-10 2 10M62.500 79.500v8l12-4zM63 81.500l10 2-10 2" />
        <text x="12" y="15" fontSize="16" fill="#fff" stroke="none" className="font-['Lato',sans-serif] font-light">Y</text>
        <text x="83" y="89" fontSize="16" fill="#fff" stroke="none" className="font-['Lato',sans-serif] font-light">X</text>
      </svg>
    </div>
  );
};

const Slash = () => (
  <svg viewBox="0 0 8 15" className="h-[15px] w-2 shrink-0" aria-hidden="true">
    <path d="M8 0L1 15" stroke="#333" />
  </svg>
);

const LayoutTabs = () => (
  <div className="flex h-4 shrink-0 border-l border-[#5a5a5a] bg-[#f0f0f0]">
    <div className="flex">
      {["M1 0h1v8H1zM7 0v8L3 4z", "M6 0v8L2 4z", "M2 0v8l4-4z", "M6 0h1v8H6zM1 0v8l4-4z"].map((d) => (
        <button key={d} aria-label="布局" className="flex w-[14px] items-center justify-center border-r border-b border-[#a0a0a0]">
          <svg viewBox="0 0 8 8" className="size-[9px]">
            <path d={d} fill="#555" />
          </svg>
        </button>
      ))}
    </div>
    <button className="h-[15px] w-[46px] bg-black text-xs leading-[15px] text-white [clip-path:polygon(0_0,100%_0,calc(100%-6px)_100%,6px_100%)]">
      模型
    </button>
    <button className="ml-[3px] w-[36px] border-b border-[#555] text-xs leading-[15px]">布局1</button>
    <Slash />
    <button className="ml-[2px] w-[36px] border-b border-[#555] text-xs leading-[15px]">布局2</button>
    <Slash />
    <div className="flex-1" />
    <div className="flex w-[370px] items-center">
      <div className="h-3 w-1 border border-[#8d8d8d] bg-white" />
      <Arrow dir="left" className="ml-1 h-4 w-[14px]" />
      <div className="flex-1" />
      <div className="h-[13px] w-4 rounded-xs border border-[#9a9a9a] bg-gradient-to-b from-white to-[#d3d3d3]" />
      <Arrow dir="right" className="ml-px size-4" />
    </div>
  </div>
);

const VScroll = () => (
  <div className="flex w-[18px] shrink-0 flex-col items-center border-b border-[#a0a0a0] bg-[#ededed]">
    <Arrow dir="up" className="h-5 w-4" />
    <div className="h-[15px] w-[15px] rounded-xs border border-[#9a9a9a] bg-gradient-to-r from-white to-[#d3d3d3]" />
    <div className="flex-1" />
    <Arrow dir="down" className="size-4" />
  </div>
);

const Workspace = () => (
  <main className="relative flex min-h-0 flex-1 bg-[#f0f0f0]">
    <aside className="w-[26px] shrink-0">
      <div className="flex flex-col items-center border-r border-b border-[#a0a0a0] pr-px">
        <DockGrip />
        <Tools names={drawTools} />
        <button aria-label="多行文字" className="h-[22px] w-[23px] font-['Open_Sans',sans-serif] text-lg leading-5">
          A
        </button>
        <div className="h-[5px]" />
      </div>
    </aside>

    <div className="flex min-w-0 flex-1 flex-col">
      <div className="flex min-h-0 flex-1">
        <Canvas />
        <VScroll />
      </div>
      <div className="flex border-b border-[#dcdcdc]">
        <div className="min-w-0 flex-1">
          <LayoutTabs />
        </div>
        <div className="w-[18px]" />
      </div>
    </div>

    <aside className="w-[27px] shrink-0 border-l-2 border-white">
      <div className="flex flex-col items-center border-r border-b border-[#a0a0a0]">
        <DockGrip />
        <Tools names={modifyTools} />
        <div className="h-[5px]" />
      </div>
      <div className="flex flex-col items-center border-t border-r border-b border-t-white border-r-[#a0a0a0] border-b-[#a0a0a0]">
        <DockGrip />
        <Tools names={orderTools} />
        <div className="h-[5px]" />
      </div>
    </aside>

    {/* pointer to the circle tool */}
    <svg viewBox="0 0 264 206" className="pointer-events-none absolute top-[158px] left-4 h-[206px] w-[264px]" aria-hidden="true">
      <path d="M0 0L22 5 19 10 261 203 15 18 11 22z" fill="#fb3b3b" />
    </svg>
  </main>
);

const CommandPanel = () => (
  <section className="shrink-0 border-t border-white bg-[#f0f0f0]">
    <div className="mt-[4px] flex border-t-2 border-b border-t-[#777] border-b-[#8d8d8d] pb-px">
      <div className="flex w-[17px] gap-px py-[6px] pl-[6px]">
        <div className="w-[3px] border-r border-l border-l-white border-r-[#a0a0a0]" />
        <div className="w-[3px] border-r border-l border-l-white border-r-[#a0a0a0]" />
      </div>
      <div className="mt-[9px] mr-[7px] min-w-0 flex-1 border-t-2 border-l border-[#666] font-['Liberation_Mono','Noto_Sans_CJK_SC',monospace] text-[13px] text-black">
        <div className="flex h-6 border-b border-[#8d8d8d] bg-white">
          <p className="flex-1 pl-px leading-[17px]">
            <span className="text-base leading-[17px]">命令</span>:
          </p>
          <div className="flex w-[17px] flex-col bg-[#ededed]">
            <Arrow dir="up" className="h-[13px] w-full" />
            <Arrow dir="down" className="h-[10px] w-full" />
          </div>
        </div>
        <div className="flex h-5">
          <div className="flex min-w-0 flex-1 items-center bg-white">
            <label htmlFor="cmd" className="pl-px leading-5 whitespace-pre">
              <span className="text-base leading-5">命令</span>: _circle <span className="text-base leading-5">指定圆的圆心或</span> [
              <span className="text-base leading-5">三点</span>(3P)/<span className="text-base leading-5">两点</span>(2P)/
              <span className="text-base leading-5">相切、相切、半径</span>(T)]:
            </label>
            <input id="cmd" className="h-5 min-w-0 flex-1 bg-transparent outline-none" />
          </div>
          <div className="flex w-[86px] items-center bg-[#ededed]">
            <Arrow dir="left" className="ml-[3px] h-4 w-[14px]" />
            <div className="ml-px h-4 w-4 rounded-xs border border-[#9a9a9a] bg-gradient-to-b from-white to-[#d3d3d3]" />
            <Arrow dir="right" className="ml-4 size-4" />
          </div>
        </div>
      </div>
    </div>
  </section>
);

const StatusBar = () => (
  <footer className="flex h-[21px] shrink-0 items-center bg-[#f0eded] pl-[5px] text-xs text-black">
    <output className="h-[18px] w-[186px] border border-t-[#8d8d8d] border-r-[#a8a8a8] border-b-[#a8a8a8] border-l-[#8d8d8d] pl-px font-['Liberation_Mono',monospace] text-[10px] leading-[18px] whitespace-pre">
      1103.8587, 1971.4634, 0.0000
    </output>
    <div className="ml-1 flex gap-1">
      {modes.map((m) => (
        <button
          key={m.name}
          aria-pressed={m.on}
          className={`h-[18px] border px-px whitespace-nowrap ${
            m.on ? "border-t-black border-r-white border-b-white border-l-black" : "border-t-white border-r-[#a0a0a0] border-b-[#a0a0a0] border-l-white"
          } ${m.latin ? "font-['Liberation_Mono',monospace] text-[10px] leading-[18px]" : "text-xs leading-4"}`}
        >
          {m.name}
        </button>
      ))}
    </div>
    <div className="flex-1" />
    <button className="flex items-center">
      注释比例:
      <span className="mr-1 ml-[10px] font-['Liberation_Mono',monospace] text-[11px]">1:1</span>
      <Down className="h-1 w-2 text-black" />
    </button>
    <button aria-label="注释可见性" className="ml-[10px]">
      <Icon name="scaleLight" />
    </button>
    <button aria-label="自动缩放" className="ml-[9px]">
      <Icon name="scaleAuto" />
    </button>
    <button aria-label="锁定" className="ml-2 flex h-[19px] w-6 items-center justify-center border border-t-[#777] border-r-white border-b-white border-l-[#777] bg-[#f8f6f6]">
      <Icon name="padlock" />
    </button>
    <button aria-label="状态栏菜单" className="mt-1 ml-[5px]">
      <Down className="h-1 w-2 text-black" />
    </button>
    <button aria-label="全屏显示" className="ml-[9px] size-4 border-2 border-[#2f5f97] bg-gradient-to-br from-white to-[#9cc0e8]" />
    <svg viewBox="0 0 12 12" className="mt-1 ml-[5px] size-3" aria-hidden="true">
      <path d="M9 1h2v2H9zM5 5h2v2H5zM9 5h2v2H9zM1 9h2v2H1zM5 9h2v2H5zM9 9h2v2H9z" fill="#bcb8b8" />
    </svg>
  </footer>
);

const App = () => (
  <div className="h-screen min-h-[700px] bg-[#15191f] p-px font-['Noto_Sans_CJK_SC',sans-serif]">
    <svg className="absolute size-0" aria-hidden="true">
      <defs>
        <linearGradient id="pale" x1="0" y1="0" x2="1" y2="1">
          <stop offset="0" stopColor="#fff" />
          <stop offset="1" stopColor="#aac6e2" />
        </linearGradient>
        <linearGradient id="dusk" x1="0" y1="0" x2="1" y2="1">
          <stop offset="0" stopColor="#1b2c49" />
          <stop offset="1" stopColor="#b9bd8e" />
        </linearGradient>
      </defs>
    </svg>
    <div className="flex h-full flex-col rounded-t-md border border-t-[#e4eef8] border-r-[#5cc4dc] border-b-[#5cc4dc] border-l-[#dce9f6] bg-[linear-gradient(#98b4d5,#bbd1ea_28px,#b9d1ea)] px-[6px] pb-[6px]">
      <TitleBar />
      <div className="flex min-h-0 flex-1 flex-col">
        <MenuBar />
        <TopToolbars />
        <Workspace />
        <CommandPanel />
        <StatusBar />
      </div>
    </div>
  </div>
);

export default App;
